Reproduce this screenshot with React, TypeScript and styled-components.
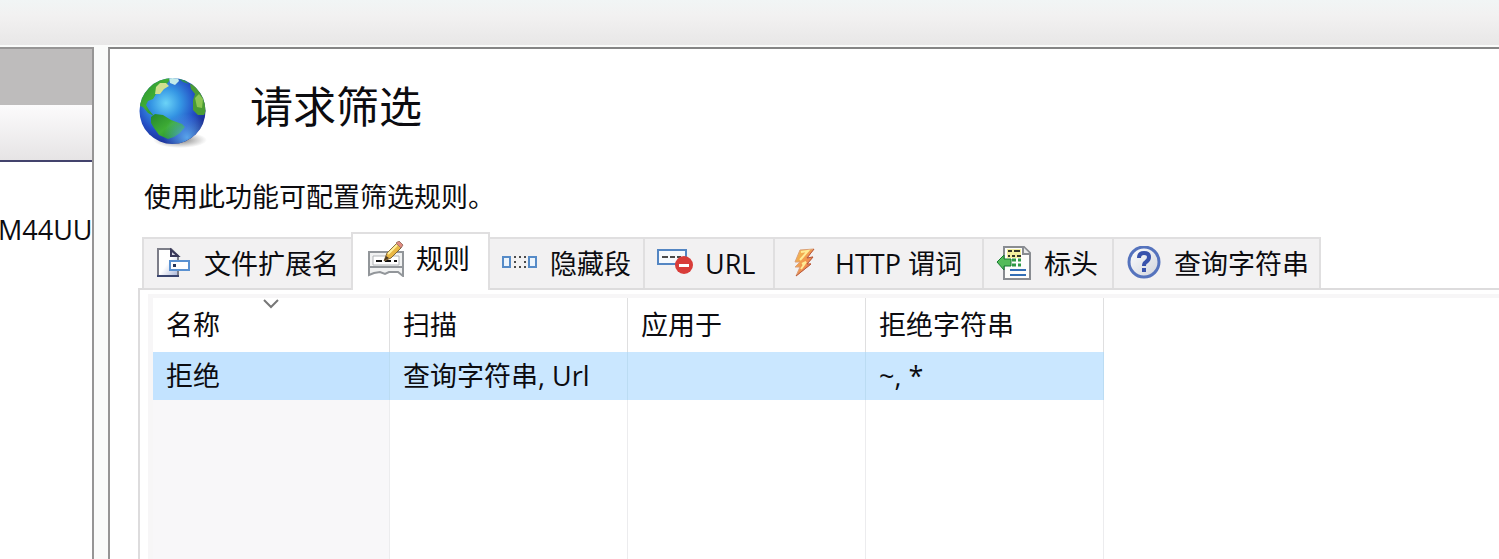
import React, { useState } from 'react';
import styled, { createGlobalStyle } from 'styled-components';

const GlobalStyle = createGlobalStyle`
  *, *::before, *::after { box-sizing: border-box; }
  html, body, #root { height: 100%; }
  body {
    margin: 0;
    overflow: hidden;
    background: #fafbfa;
    color: #0c0c10;
    font-family: 'Open Sans', 'Noto Sans CJK SC', sans-serif;
    font-size: 27px;
    line-height: 36px;
  }
`;

const Window = styled.div`
  display: flex;
  flex-direction: column;
  height: 100%;
`;

const TopBar = styled.header`
  flex: none;
  height: 45px;
  background: linear-gradient(#f1f5f5, #f2f1f1 35%, #e8e7e7);
`;

const Workspace = styled.div`
  display: flex;
  flex: 1;
  gap: 14px;
  min-height: 0;
  padding-top: 2px;
`;

const Sidebar = styled.aside`
  flex: none;
  width: 94px;
  overflow: hidden;
  background: #fff;
  border-top: 2px solid #969595;
  border-right: 2px solid #969595;
`;

const SidebarTitle = styled.div`
  height: 56px;
  background: #bebcbc;
`;

const SidebarTools = styled.div`
  height: 57px;
  background: linear-gradient(#fcfbfc, #e6e4e5);
  border-bottom: 2px solid #43436c;
`;

const ServerNode = styled.div`
  margin: 50px 0 0 -2px;
  white-space: nowrap;
`;

const Main = styled.main`
  display: flex;
  flex: 1;
  flex-direction: column;
  min-width: 0;
  padding: 24px 0 0 28px;
  background: #fff;
  border-top: 2px solid #858585;
  border-left: 2px solid #969595;
`;

const TitleRow = styled.div`
  display: flex;
  flex: none;
  gap: 41px;
  height: 76px;
`;

const Title = styled.h1`
  margin: 0;
  font-size: 43px;
  font-weight: 400;
  line-height: 68px;
`;

const Description = styled.p`
  flex: none;
  margin: 30px 0 16px 6px;
`;

const TabList = styled.div`
  display: flex;
  flex: none;
  align-items: flex-end;
  height: 57px;
  padding-left: 4px;
`;

const Tab = styled.button<{ $active: boolean; $width: number }>`
  position: relative;
  z-index: ${(p) => (p.$active ? 1 : 0)};
  display: flex;
  flex: none;
  align-items: center;
  gap: 12px;
  width: ${(p) => p.$width}px;
  height: ${(p) => (p.$active ? '58px' : '51px')};
  margin-bottom: ${(p) => (p.$active ? '-2px' : '0')};
  padding: ${(p) => (p.$active ? '0 0 6px 15px' : '0 0 0 12px')};
  border: 0 solid #e0dfe0;
  border-width: ${(p) => (p.$active ? '2px 2px 0' : '2px 0 0 2px')};
  background: ${(p) => (p.$active ? '#fff' : '#f2f1f2')};
  color: inherit;
  font: inherit;
  white-space: nowrap;

  &:last-child { border-right-width: 2px; }
  [aria-selected='true'] + & { border-left-width: 0; }
`;

const TabPanel = styled.section`
  flex: 1;
  min-height: 0;
  padding: 8px 0 0 13px;
  border-top: 2px solid #dddcdd;
  border-left: 2px solid #dddcdd;
  background: linear-gradient(#f7f6f7, #f7f6f7) 8px 4px / 100% 100% no-repeat #fff;
`;

const ListArea = styled.div`
  height: 100%;
  background: #fff;
`;

const RuleTable = styled.table`
  width: 951px;
  height: 100%;
  border-spacing: 0;
  table-layout: fixed;
`;

const NameColumn = styled.col`
  width: 237px;
`;

const HeadCell = styled.th`
  position: relative;
  height: 54px;
  padding: 0 0 0 13px;
  border-right: 1px solid #dfdfe0;
  font-weight: 400;
  text-align: left;
`;

const SortMark = styled.svg`
  position: absolute;
  top: 1px;
  left: 50%;
  margin-left: -8px;
`;

const Cell = styled.td`
  height: 48px;
  padding: 0 0 0 13px;
  border-right: 1px solid #bbdcf3;
  background: #cae7ff;

  &:first-child { background: #c3e3ff; }
`;

const EmptyCell = styled.td`
  padding: 0;
  border-right: 1px solid #ececee;

  &:first-child { background: #f8f7f9; }
`;

const Globe = () => (
  <svg width="71" height="76" viewBox="0 0 71 76" aria-hidden="true">
    <defs>
      <radialGradient id="sea" cx=".4" cy=".38" r=".64">
        <stop offset="0" stopColor="#6bd3f7" />
        <stop offset=".35" stopColor="#3596e4" />
        <stop offset=".7" stopColor="#244ec4" />
        <stop offset="1" stopColor="#1b2d91" />
      </radialGradient>
      <radialGradient id="glow" cx=".72" cy=".9" r=".36">
        <stop offset="0" stopColor="#64b9fa" stopOpacity=".85" />
        <stop offset="1" stopColor="#64b9fa" stopOpacity="0" />
      </radialGradient>
      <radialGradient id="shade">
        <stop offset="0" stopColor="#555" stopOpacity=".8" />
        <stop offset="1" stopColor="#777" stopOpacity="0" />
      </radialGradient>
      <linearGradient id="land" x2="1" y2="1">
        <stop offset="0" stopColor="#24862c" />
        <stop offset=".5" stopColor="#3fae35" />
        <stop offset="1" stopColor="#147a28" />
      </linearGradient>
      <clipPath id="disc"><circle cx="34.500" cy="38" r="33" /></clipPath>
    </defs>
    <ellipse cx="42" cy="67" rx="27" ry="8" fill="url(#shade)" />
    <circle cx="34.500" cy="38" r="33" fill="url(#sea)" />
    <g clipPath="url(#disc)">
      <path d="M0 32V16L16 2l17-1-2 7-3 4-4 6-6 3-3 5-5 2-2 4 3 5 5 6-6-3-5-6Z" fill="url(#land)" />
      <path d="m18 14 4-4 6 0 3 3-5 3-4 5-5 0Z" fill="#cfe090" />
      <path d="m31 4 8-1 2 5-4 4-5-2Z" fill="#c4ebea" />
      <path d="m40 5 7 2 4 4-6-2Z" fill="#2f8e55" />
      <path d="m52 11 5 1 5 7 5 7 2 10-3 6-6 0-5-5v-10l2-6-4-5Z" fill="#4a9c34" />
      <path d="m57 25 4-4 4 5-1 9-5-1Z" fill="#8cc652" />
      <path d="m13 44 4-3 8 1 8 5 11 4 3 3-5 6-6 4-6 2-9-4-5-7-3-5Z" fill="url(#land)" />
      <circle cx="34.500" cy="38" r="33" fill="url(#glow)" />
    </g>
  </svg>
);

const IconFrame = styled.svg`
  flex: none;
  width: 36px;
  height: 36px;
`;

const FileIcon = () => (
  <IconFrame viewBox="0 0 36 36" aria-hidden="true">
    <defs><linearGradient id="sheet" x1="0" x2="1" y1="0" y2="1"><stop offset=".5" stopColor="#fff" /><stop offset="1" stopColor="#a8b4d8" /></linearGradient></defs>
    <path d="M2 3h13l7 7v20H2Z" fill="url(#sheet)" stroke="#7c7d88" strokeWidth="2" />
    <path d="M1 30h22" stroke="#39446f" strokeWidth="2" />
    <path d="M15 4v6h7Z" fill="#d9d9e6" stroke="#39385a" strokeWidth="2" />
    <path d="M14 15h19v9H14Z" fill="#fff" stroke="#5a91d1" strokeWidth="2" />
    <path d="M17 18h3v3h-3Z" fill="#25355a" />
  </IconFrame>
);

const RuleIcon = () => (
  <IconFrame viewBox="0 0 36 36" aria-hidden="true">
    <path d="M1 11h34v24l-5-4h-9l-4 2-5-2-6 1-5 2Z" fill="#f1f2f2" stroke="#92969a" strokeWidth="2" />
    <path d="M5 15h26v9H5Z" fill="#fff" stroke="#b2b5b8" />
    <path d="M1 26h34" stroke="#92969a" strokeWidth="2" />
    <path d="M8 20h6m3 0h6m3 0h3" stroke="#111" strokeWidth="2" />
    <path d="m16 20 3-8L29 2l5 4-11 11Z" fill="#e9b744" stroke="#80663a" />
    <path d="m20 13 9-9" stroke="#fff09c" strokeWidth="2" />
    <path d="m28 2 3-2 4 4-2 3Z" fill="#e08a80" stroke="#a2766a" />
    <path d="m16 20 2-5 3 2Z" fill="#4b3922" />
  </IconFrame>
);

const SegmentIcon = () => (
  <IconFrame viewBox="0 0 36 36" aria-hidden="true">
    <path d="M1 11h7v10H1Zm26 0h7v10h-7Z" fill="#eef5fc" stroke="#568bc8" strokeWidth="2" />
    <path d="M12 11h12M12 21h12" stroke="#4b4b4b" strokeWidth="2" strokeDasharray="2 3" />
    <path d="M13 15v3m10-3v3" stroke="#4b4b4b" strokeWidth="2" strokeDasharray="2 3" />
  </IconFrame>
);

const UrlIcon = () => (
  <IconFrame viewBox="0 0 36 36" aria-hidden="true">
    <path d="M1 4h28v14H1Z" fill="#f6f9fd" stroke="#5486c3" strokeWidth="2" />
    <path d="M5 11h6m2 0h5m2 0h4" stroke="#4b4b4b" strokeWidth="2" />
    <circle cx="27" cy="19" r="9" fill="#d83c39" />
    <path d="M22 18h10v3H22Z" fill="#fff" />
  </IconFrame>
);

const BoltIcon = () => (
  <IconFrame viewBox="0 0 36 36" aria-hidden="true">
    <defs><linearGradient id="bolt" x1="0" y1="0" x2="1" y2="1"><stop offset="0" stopColor="#f3c650" /><stop offset=".6" stopColor="#f08b4e" /><stop offset="1" stopColor="#d3573c" /></linearGradient></defs>
    <path d="m13 4 14-1-7 9 6-1-6 7 4 0L9 30l4-9H8l5-5-5 0Z" fill="url(#bolt)" stroke="#dba078" />
    <path d="m14 6 7-1-8 9m2 4 4-2-5 7" fill="none" stroke="#ffeb94" strokeWidth="2" />
    <path d="m27 3-7 9 6-1-6 7h4L9 30" fill="none" stroke="#b9573b" />
  </IconFrame>
);

const HeaderIcon = () => (
  <IconFrame viewBox="0 0 36 36" aria-hidden="true">
    <path d="M8 1h20l6 6v26H8Z" fill="#fdfdfb" stroke="#898c91" strokeWidth="2" />
    <path d="M27 1v7h7" fill="#e9eae9" stroke="#898c91" strokeWidth="2" />
    <path d="M11 3h14v9H11Z" fill="#f3ef9d" />
    <path d="M12 5h4m2 0h6M12 10h2m2 0h3m2 0h4" stroke="#323429" strokeWidth="2" />
    <path d="m1 16 7-7v4h7v7H8v4Z" fill="#55bb5a" stroke="#167b31" />
    <path d="M16 14h4m2 0h3M16 19h4m2 0h3" stroke="#2e9845" strokeWidth="3" />
    <path d="M14 24h16M14 29h16" stroke="#326eb5" strokeWidth="2" />
  </IconFrame>
);

const QueryIcon = () => (
  <IconFrame viewBox="0 0 36 36" aria-hidden="true">
    <defs><linearGradient id="query" x2="1" y2="1"><stop offset="0" stopColor="#fff" /><stop offset="1" stopColor="#cfd3dc" /></linearGradient></defs>
    <circle cx="18" cy="16" r="15" fill="url(#query)" stroke="#5573bd" strokeWidth="3" />
    <path d="M13 12q0-5 5-5t5 4q0 3-3 5-2 1-2 4" fill="none" stroke="#3852ac" strokeWidth="4" />
    <path d="M16 22h4v4h-4Z" fill="#3852ac" />
  </IconFrame>
);

const tabs = [
  { label: '文件扩展名', width: 209, Icon: FileIcon },
  { label: '规则', width: 139, Icon: RuleIcon },
  { label: '隐藏段', width: 153, Icon: SegmentIcon },
  { label: 'URL', width: 130, Icon: UrlIcon },
  { label: 'HTTP 谓词', width: 209, Icon: BoltIcon },
  { label: '标头', width: 130, Icon: HeaderIcon },
  { label: '查询字符串', width: 209, Icon: QueryIcon },
];

const columns = ['名称', '扫描', '应用于', '拒绝字符串'];
const rules = [['拒绝', '查询字符串, Url', '', '~, *']];

export default function App() {
  const [active, setActive] = useState(1);
  return (
    <Window>
      <GlobalStyle />
      <TopBar />
      <Workspace>
        <Sidebar>
          <SidebarTitle />
          <SidebarTools />
          <ServerNode>M44UU</ServerNode>
        </Sidebar>
        <Main>
          <TitleRow>
            <Globe />
            <Title>请求筛选</Title>
          </TitleRow>
          <Description>使用此功能可配置筛选规则。</Description>
          <TabList role="tablist">
            {tabs.map(({ label, width, Icon }, i) => (
              <Tab
                key={label}
                id={`tab-${i}`}
                type="button"
                role="tab"
                aria-selected={i === active}
                aria-controls="rules"
                $active={i === active}
                $width={width}
                onClick={() => setActive(i)}
              >
                <Icon />
                {label}
              </Tab>
            ))}
          </TabList>
          <TabPanel id="rules" role="tabpanel" aria-labelledby={`tab-${active}`}>
            <ListArea>
              <RuleTable>
                <colgroup>
                  <NameColumn />
                  <col />
                  <col />
                  <col />
                </colgroup>
                <thead>
                  <tr>
                    {columns.map((name, i) => (
                      <HeadCell key={name} scope="col" aria-sort={i === 0 ? 'ascending' : undefined}>
                        {name}
                        {i === 0 && (
                          <SortMark width="17" height="10" viewBox="0 0 17 10" aria-hidden="true">
                            <path d="m1 1 7 7 7-7" fill="none" stroke="#777" strokeWidth="2" />
                          </SortMark>
                        )}
                      </HeadCell>
                    ))}
                  </tr>
                </thead>
                <tbody>
                  {rules.map((rule) => (
                    <tr key={rule[0]}>
                      {rule.map((value, i) => (
                        <Cell key={columns[i]}>{value}</Cell>
                      ))}
                    </tr>
                  ))}
                  <tr>
                    {columns.map((name) => (
                      <EmptyCell key={name} />
                    ))}
                  </tr>
                </tbody>
              </RuleTable>
            </ListArea>
          </TabPanel>
        </Main>
      </Workspace>
    </Window>
  );
}
